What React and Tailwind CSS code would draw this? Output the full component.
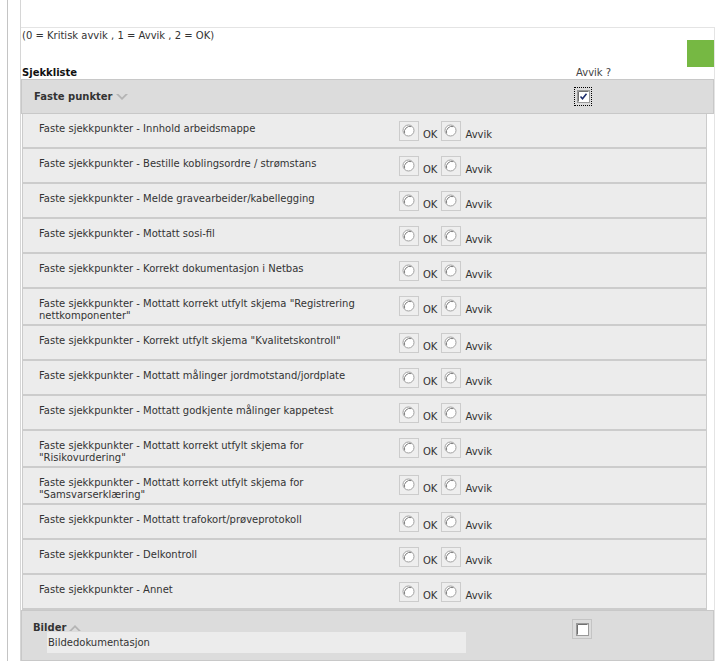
import React from 'react';

const items = [
  'Faste sjekkpunkter - Innhold arbeidsmappe',
  'Faste sjekkpunkter - Bestille koblingsordre / strømstans',
  'Faste sjekkpunkter - Melde gravearbeider/kabellegging',
  'Faste sjekkpunkter - Mottatt sosi-fil',
  'Faste sjekkpunkter - Korrekt dokumentasjon i Netbas',
  'Faste sjekkpunkter - Mottatt korrekt utfylt skjema "Registrering nettkomponenter"',
  'Faste sjekkpunkter - Korrekt utfylt skjema "Kvalitetskontroll"',
  'Faste sjekkpunkter - Mottatt målinger jordmotstand/jordplate',
  'Faste sjekkpunkter - Mottatt godkjente målinger kappetest',
  'Faste sjekkpunkter - Mottatt korrekt utfylt skjema for "Risikovurdering"',
  'Faste sjekkpunkter - Mottatt korrekt utfylt skjema for "Samsvarserklæring"',
  'Faste sjekkpunkter - Mottatt trafokort/prøveprotokoll',
  'Faste sjekkpunkter - Delkontroll',
  'Faste sjekkpunkter - Annet',
];

function Radio() {
  return (
    <span className="flex h-[20px] w-[20px] items-start justify-start border border-[#cccccc] bg-[#eeeeee] pl-[2px] pt-[2px]">
      <svg width="13" height="13" viewBox="0 0 13 13">
        <circle cx="6.5" cy="6.5" r="5.5" fill="#ffffff" stroke="#a0a0a0" strokeWidth="1" />
        <path d="M2.6 9.4 A5.5 5.5 0 0 1 9.4 2.6" fill="none" stroke="#808080" strokeWidth="1" />
      </svg>
    </span>
  );
}

function Checkbox({ checked }) {
  return (
    <svg width="13" height="13" viewBox="0 0 13 13">
      <rect x="0.5" y="0.5" width="12" height="12" fill="#ffffff" stroke="#9a9a9a" />
      <path d="M1.5 11.5 V1.5 H11.5" fill="none" stroke="#707070" />
      {checked && <path d="M3.5 6.5 L5.5 8.8 L9.5 3.8" fill="none" stroke="#1a2a6a" strokeWidth="1.5" />}
    </svg>
  );
}

function Chevron({ up }) {
  return (
    <svg width="12" height="8" viewBox="0 0 12 8" className="ml-[3px]">
      <path d={up ? 'M0 7 L6 1 L12 7 L9.5 7 L6 3.5 L2.5 7 Z' : 'M0 1 L6 7 L12 1 L9.5 1 L6 4.5 L2.5 1 Z'} fill="#b4b4b4" />
    </svg>
  );
}

export default function App() {
  return (
    <div className="flex h-[661px] w-[720px] overflow-hidden bg-white text-[10px] leading-[12px] text-[#333333]" style={{ fontFamily: '"DejaVu Sans", Verdana, sans-serif' }}>
      <div className="w-[7px]" />
      <div className="w-px bg-[#c4c4c4]" />
      <div className="w-[12px]" />
      <div className="flex w-[695px] flex-col border-l border-[#d6d6d6]">
        <div className="h-[27px]" />
        <div className="flex flex-1 flex-col border-t border-r border-[#e4e4e4]">
          <div className="flex h-[39px]">
            <div className="flex-1 pl-[1px] pt-[2px]">(0 = Kritisk avvik , 1 = Avvik , 2 = OK)</div>
            <div className="mt-[12px] h-[27px] w-[27px] bg-[#76b843]" />
          </div>
          <div className="flex h-[12px] items-end">
            <span className="w-[555px] pl-[1px] font-bold text-[#111111]">Sjekkliste</span>
            <span className="text-[#444444]">Avvik ?</span>
          </div>
          <div className="flex h-[35px] items-center border border-[#c8c8c8] bg-[#dcdcdc] pr-[6px]">
            <div className="flex w-[552px] items-center pl-[12px] font-bold">
              Faste punkter
              <Chevron />
            </div>
            <div className="flex h-[19px] w-[18px] items-center justify-center border border-dotted border-black">
              <Checkbox checked />
            </div>
          </div>
          <div className="mr-[7px] ml-px flex flex-col border-x border-[#cccccc]">
            {items.map((t) => (
              <div key={t} className="flex min-h-[35px] border-b-2 border-[#cccccc] bg-[#ececec]">
                <div className="w-[376px] pl-[16px] pr-[30px] pt-[9px] pb-[2px]">{t}</div>
                <div className="flex items-end gap-[4px] self-start pt-[7px]">
                  <Radio />
                  <span>OK</span>
                  <Radio />
                  <span>Avvik</span>
                </div>
              </div>
            ))}
          </div>
          <div className="flex flex-1 border border-[#c8c8c8] bg-[#dcdcdc]">
            <div className="flex w-[550px] flex-col pt-[11px]">
              <div className="flex h-[12px] items-center pl-[11px] font-bold">
                Bilder
                <Chevron up />
              </div>
              <div className="ml-[25px] mt-[-2px] flex h-[21px] w-[419px] items-center bg-[#ececec] pl-[1px]">Bildedokumentasjon</div>
            </div>
            <div className="mt-[8px] flex h-[20px] w-[20px] items-center justify-center border border-[#c4c4c4]">
              <Checkbox />
            </div>
          </div>
        </div>
      </div>
    </div>
  );
}
